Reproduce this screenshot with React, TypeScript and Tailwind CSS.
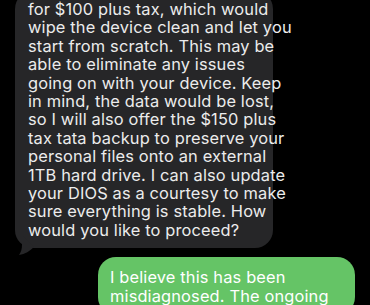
const grayLines = [
  'for $100 plus tax, which would',
  'wipe the device clean and let you',
  'start from scratch. This may be',
  'able to eliminate any issues',
  'going on with your device. Keep',
  'in mind, the data would be lost,',
  'so I will also offer the $150 plus',
  'tax tata backup to preserve your',
  'personal files onto an external',
  '1TB hard drive. I can also update',
  'your DIOS as a courtesy to make',
  'sure everything is stable. How',
  'would you like to proceed?',
];

const greenLines = ['I believe this has been', 'misdiagnosed. The ongoing'];

export default function App() {
  return (
    <div className="h-[305px] w-[370px] overflow-hidden bg-black font-['Inter',sans-serif] text-[16.4px] leading-[18.4px] tracking-[0.15px]">
      <div className="relative ml-[15px] mt-[-9px] w-[258px]">
        <div className="rounded-[18px] bg-[#262628] px-[13px] pb-[9px] pt-[9px] text-[#ececec]">
          {grayLines.map((line) => (
            <div key={line} className="whitespace-nowrap">
              {line}
            </div>
          ))}
        </div>
        <svg className="absolute bottom-[-7px] left-[-1px]" width="24" height="20" viewBox="0 0 24 20">
          <path d="M8 0 L8 10 C8 14 7 17 5 20 C11 19 16 16 20 12 Z" fill="#262628" />
        </svg>
      </div>
      <div className="mr-[15px] mt-[9px] flex justify-end">
        <div className="w-[257px] rounded-[18px] bg-[#65c466] px-[12px] pt-[11px] pb-[10px] text-white">
          {greenLines.map((line) => (
            <div key={line} className="whitespace-nowrap">
              {line}
            </div>
          ))}
        </div>
      </div>
    </div>
  );
}
